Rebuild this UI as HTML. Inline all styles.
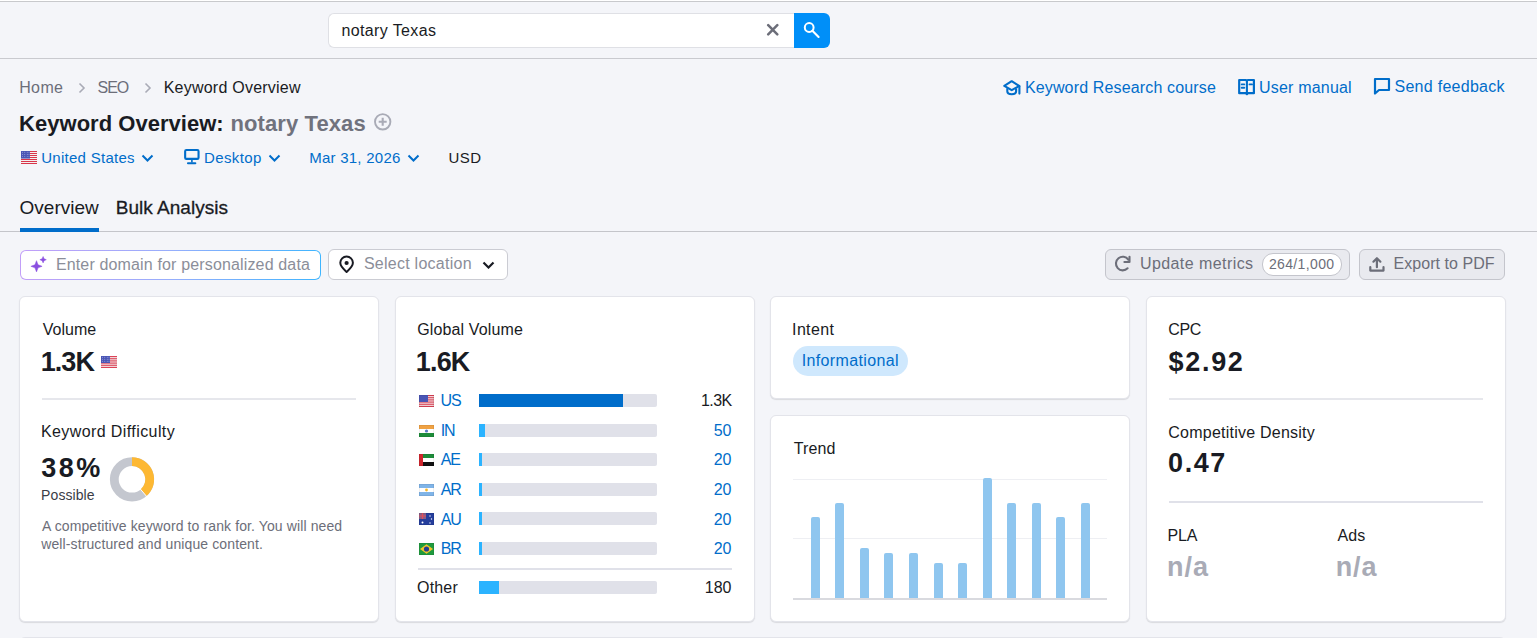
<!DOCTYPE html>
<html><head><meta charset="utf-8"><title>Keyword Overview</title>
<style>
html,body{margin:0;padding:0;}
body{width:1537px;height:638px;overflow:hidden;position:relative;background:#f4f5f9;font-family:"Liberation Sans",sans-serif;}
.t{position:absolute;white-space:nowrap;line-height:1;}
.card{position:absolute;background:#fff;border:1px solid #e3e4ea;border-radius:6px;box-shadow:0 1px 1px rgba(25,27,35,0.12);}
.bar{position:absolute;width:178px;height:13px;background:#e0e1e9;border-radius:0 2px 2px 0;overflow:hidden;}
.bar div{height:13px;}
</style></head><body>
<div style="position:absolute;left:0;top:0;width:1537px;height:1px;background:#fff"></div>
<div style="position:absolute;left:0;top:1px;width:1537px;height:1px;background:#c8c9cc"></div>
<div style="position:absolute;left:0;top:58px;width:1537px;height:1px;background:#c9cacf"></div>
<div style="position:absolute;left:328px;top:13px;width:465px;height:33px;background:#fff;border:1px solid #dfe0e5;border-right:none;border-radius:6px 0 0 6px"></div>
<div class="t" style="left:341.4px;top:23px;font-size:16px;color:#191b23;letter-spacing:0.38px;">notary Texas</div>
<svg style="position:absolute;left:766px;top:23px" width="13" height="13" viewBox="0 0 13 13"><path d="M2.2 2.2L11.3 11.3M11.3 2.2L2.2 11.3" stroke="#6c6e79" stroke-width="2.5" stroke-linecap="round"/></svg>
<div style="position:absolute;left:794px;top:13px;width:36px;height:35px;background:#008ff8;border-radius:0 6px 6px 0"></div>
<svg style="position:absolute;left:802px;top:20px" width="20" height="20" viewBox="0 0 20 20"><circle cx="7.2" cy="7.5" r="4.4" fill="none" stroke="#fff" stroke-width="2"/><path d="M10.4 10.8L16.6 17" stroke="#fff" stroke-width="2.1" stroke-linecap="round"/></svg>
<div class="t" style="left:19.2px;top:80px;font-size:16px;color:#6c6e79;letter-spacing:0.37px;">Home</div>
<svg style="position:absolute;left:77px;top:82px" width="10" height="12" viewBox="0 0 10 12"><path d="M2.5 1.5L7 6L2.5 10.5" fill="none" stroke="#a9abb6" stroke-width="1.6"/></svg>
<div class="t" style="left:97.5px;top:80px;font-size:16px;color:#6c6e79;letter-spacing:-1.01px;">SEO</div>
<svg style="position:absolute;left:143px;top:82px" width="10" height="12" viewBox="0 0 10 12"><path d="M2.5 1.5L7 6L2.5 10.5" fill="none" stroke="#a9abb6" stroke-width="1.6"/></svg>
<div class="t" style="left:163.7px;top:80px;font-size:16px;color:#191b23;letter-spacing:0.23px;">Keyword Overview</div>
<svg style="position:absolute;left:1003px;top:79px" width="19" height="18" viewBox="0 0 19 18"><path d="M8.7 2.2L16.2 6.9L8.7 11.2L1.3 6.9Z" fill="none" stroke="#006dca" stroke-width="2.1" stroke-linejoin="round"/><path d="M4.3 9.2V12.3C4.3 14.3 6.3 15.3 8.7 15.3S13.1 14.3 13.1 12.3V9.2" fill="none" stroke="#006dca" stroke-width="2.1"/><path d="M16.4 7.2V14.6" stroke="#006dca" stroke-width="2.1" stroke-linecap="round"/></svg>
<div class="t" style="left:1024.9px;top:80px;font-size:16px;color:#006dca;letter-spacing:0.15px;">Keyword Research course</div>
<svg style="position:absolute;left:1238px;top:78px" width="18" height="18" viewBox="0 0 18 18"><path d="M1.2 2H8L8.9 2.8L9.8 2H15.9V15.2H9.8L8.9 16.2L8 15.2H1.2Z" fill="none" stroke="#006dca" stroke-width="2.2" stroke-linejoin="round"/><path d="M8.9 2.5V15.5" stroke="#006dca" stroke-width="2.1"/><path d="M3.7 6.4H6.3M3.7 9.7H6.3M11.5 6.4H14" stroke="#006dca" stroke-width="1.9" stroke-linecap="round"/></svg>
<div class="t" style="left:1259.1px;top:80px;font-size:16px;color:#006dca;letter-spacing:0.18px;">User manual</div>
<svg style="position:absolute;left:1373px;top:77px" width="18" height="19" viewBox="0 0 18 19"><path d="M2 2H16V13H6L2 16.5Z" fill="none" stroke="#006dca" stroke-width="2.2" stroke-linejoin="round"/></svg>
<div class="t" style="left:1394.5px;top:79px;font-size:16px;color:#006dca;letter-spacing:0.27px;">Send feedback</div>
<div class="t" style="left:19.1px;top:113px;font-size:22px;color:#191b23;font-weight:700;letter-spacing:0.02px;">Keyword Overview:</div>
<div class="t" style="left:230.5px;top:113px;font-size:22px;color:#70727d;font-weight:700;letter-spacing:0.10px;">notary Texas</div>
<svg style="position:absolute;left:373px;top:113px" width="19" height="19" viewBox="0 0 19 19"><circle cx="9.7" cy="8.8" r="7.7" fill="none" stroke="#a9abb6" stroke-width="1.9"/><path d="M9.7 4.8V12.8M5.7 8.8H13.7" stroke="#a9abb6" stroke-width="2.1"/></svg>
<svg style="position:absolute;left:21px;top:151px" width="16" height="13" viewBox="0 0 16 12" preserveAspectRatio="none"><rect width="16" height="12" fill="#f4f0f0"/><rect x="0" y="0.00" width="16" height="0.92" fill="#d8354a"/><rect x="0" y="1.85" width="16" height="0.92" fill="#d8354a"/><rect x="0" y="3.69" width="16" height="0.92" fill="#d8354a"/><rect x="0" y="5.54" width="16" height="0.92" fill="#d8354a"/><rect x="0" y="7.38" width="16" height="0.92" fill="#d8354a"/><rect x="0" y="9.23" width="16" height="0.92" fill="#d8354a"/><rect x="0" y="11.08" width="16" height="0.92" fill="#d8354a"/><rect x="0" y="0" width="9" height="7" fill="#4a55b5"/><circle cx="1.4" cy="1.2" r="0.45" fill="#c8cdf0"/><circle cx="3.8" cy="1.2" r="0.45" fill="#c8cdf0"/><circle cx="6.2" cy="1.2" r="0.45" fill="#c8cdf0"/><circle cx="8.0" cy="1.2" r="0.45" fill="#c8cdf0"/><circle cx="1.4" cy="3.2" r="0.45" fill="#c8cdf0"/><circle cx="3.8" cy="3.2" r="0.45" fill="#c8cdf0"/><circle cx="6.2" cy="3.2" r="0.45" fill="#c8cdf0"/><circle cx="8.0" cy="3.2" r="0.45" fill="#c8cdf0"/><circle cx="1.4" cy="5.2" r="0.45" fill="#c8cdf0"/><circle cx="3.8" cy="5.2" r="0.45" fill="#c8cdf0"/><circle cx="6.2" cy="5.2" r="0.45" fill="#c8cdf0"/><circle cx="8.0" cy="5.2" r="0.45" fill="#c8cdf0"/></svg>
<div class="t" style="left:41.2px;top:150px;font-size:15px;color:#006dca;letter-spacing:0.28px;">United States</div>
<svg style="position:absolute;left:141px;top:154px" width="13" height="8" viewBox="0 0 13 8"><path d="M1.5 1.5L6.5 6.5L11.5 1.5" fill="none" stroke="#006dca" stroke-width="2"/></svg>
<svg style="position:absolute;left:183px;top:148px" width="17" height="17" viewBox="0 0 17 17"><rect x="2.15" y="1.95" width="13.4" height="8.9" rx="1.2" fill="none" stroke="#006dca" stroke-width="2.1"/><path d="M8.9 11.5V14.5" stroke="#006dca" stroke-width="1.6"/><path d="M5 15.2H12.3" stroke="#006dca" stroke-width="2.1" stroke-linecap="round"/></svg>
<div class="t" style="left:204.0px;top:150px;font-size:15px;color:#006dca;letter-spacing:0.38px;">Desktop</div>
<svg style="position:absolute;left:268px;top:154px" width="13" height="8" viewBox="0 0 13 8"><path d="M1.5 1.5L6.5 6.5L11.5 1.5" fill="none" stroke="#006dca" stroke-width="2"/></svg>
<div class="t" style="left:309.2px;top:150px;font-size:15px;color:#006dca;letter-spacing:0.25px;">Mar 31, 2026</div>
<svg style="position:absolute;left:407px;top:154px" width="13" height="8" viewBox="0 0 13 8"><path d="M1.5 1.5L6.5 6.5L11.5 1.5" fill="none" stroke="#006dca" stroke-width="2"/></svg>
<div class="t" style="left:448.5px;top:150px;font-size:15px;color:#191b23;letter-spacing:0.49px;">USD</div>
<div class="t" style="left:19.5px;top:198px;font-size:19px;color:#191b23;letter-spacing:0.01px;">Overview</div>
<div class="t" style="left:115.7px;top:198px;font-size:19px;color:#191b23;letter-spacing:0.03px;-webkit-text-stroke:0.3px #191b23;">Bulk Analysis</div>
<div style="position:absolute;left:0;top:231px;width:1537px;height:1px;background:#c4c5ca"></div>
<div style="position:absolute;left:20px;top:228px;width:79px;height:4px;background:#006dca"></div>
<div style="position:absolute;left:20px;top:250px;width:301px;height:30px;border-radius:6px;background:linear-gradient(90deg,#c29ef8 0%,#97aefc 50%,#3eb5ff 100%)"></div>
<div style="position:absolute;left:21px;top:251px;width:299px;height:28px;border-radius:5px;background:#fff"></div>
<svg style="position:absolute;left:29px;top:256px" width="20" height="20" viewBox="0 0 20 20"><path d="M7.5 4.700000000000001L9.05 8.75L13.1 10.3L9.05 11.85L7.5 15.9L5.95 11.85L1.9000000000000004 10.3L5.95 8.75Z" fill="#8a4fe0" stroke="#8a4fe0" stroke-width="0.5" stroke-linejoin="round"/><path d="M14.1 0.5L15.05 2.75L17.3 3.7L15.05 4.65L14.1 6.9L13.15 4.65L10.899999999999999 3.7L13.15 2.75Z" fill="#8a4fe0" stroke="#8a4fe0" stroke-width="0.5" stroke-linejoin="round"/></svg>
<div class="t" style="left:55.9px;top:257px;font-size:16px;color:#8b8e99;letter-spacing:0.15px;">Enter domain for personalized data</div>
<div style="position:absolute;left:328px;top:249px;width:178px;height:29px;border:1px solid #cbccd3;border-radius:6px;background:#fff"></div>
<svg style="position:absolute;left:337px;top:255px" width="19" height="19" viewBox="0 0 19 19"><path d="M9.6 16.9C7.5 15 3.3 11.6 3.3 7.8A6.3 6.3 0 0 1 15.9 7.8C15.9 11.6 11.7 15 9.6 16.9Z" fill="none" stroke="#191b23" stroke-width="2" stroke-linejoin="round"/><circle cx="9.6" cy="8" r="2.1" fill="#191b23"/></svg>
<div class="t" style="left:363.9px;top:256px;font-size:16px;color:#8b8e99;letter-spacing:0.26px;">Select location</div>
<svg style="position:absolute;left:482px;top:261px" width="13" height="8" viewBox="0 0 13 8"><path d="M1.5 1.5L6.5 6.5L11.5 1.5" fill="none" stroke="#191b23" stroke-width="2.2"/></svg>
<div style="position:absolute;left:1105px;top:249px;width:243px;height:29px;border:1px solid #c4c5cc;border-radius:6px;background:#e9eaef"></div>
<svg style="position:absolute;left:1113px;top:255px" width="19" height="19" viewBox="0 0 19 19"><path d="M15.3 4.6A6.8 6.8 0 1 0 14.6 13.3" fill="none" stroke="#6c6e79" stroke-width="2.1" stroke-linecap="round"/><path d="M11.4 7H16.5V1.8" fill="none" stroke="#6c6e79" stroke-width="2.1" stroke-linecap="round" stroke-linejoin="round"/></svg>
<div class="t" style="left:1139.9px;top:256px;font-size:16px;color:#6c6e79;letter-spacing:0.43px;">Update metrics</div>
<div style="position:absolute;left:1262px;top:253px;width:78px;height:21px;border:1px solid #c4c5cc;border-radius:11px;background:#fff"></div>
<div class="t" style="left:1268.9px;top:257px;font-size:14px;color:#6c6e79;letter-spacing:0.37px;">264/1,000</div>
<div style="position:absolute;left:1359px;top:249px;width:144px;height:29px;border:1px solid #c4c5cc;border-radius:6px;background:#e9eaef"></div>
<svg style="position:absolute;left:1368px;top:256px" width="18" height="17" viewBox="0 0 18 17"><path d="M2.3 11.2V14.6H15.5V11.2" fill="none" stroke="#6c6e79" stroke-width="2.2" stroke-linecap="round" stroke-linejoin="round"/><path d="M8.9 11.2V2.3M5.4 5.7L8.9 2.2L12.4 5.7" fill="none" stroke="#6c6e79" stroke-width="2.2" stroke-linecap="round" stroke-linejoin="round"/></svg>
<div class="t" style="left:1393.6px;top:256px;font-size:16px;color:#6c6e79;letter-spacing:0.04px;">Export to PDF</div>
<div class="card" style="left:19px;top:296px;width:358px;height:324px"></div>
<div class="card" style="left:395px;top:296px;width:358px;height:324px"></div>
<div class="card" style="left:770px;top:296px;width:358px;height:101px"></div>
<div class="card" style="left:770px;top:415px;width:358px;height:205px"></div>
<div class="card" style="left:1146px;top:296px;width:358px;height:324px"></div>
<div class="card" style="left:19px;top:637px;width:1485px;height:100px"></div>
<div class="t" style="left:42.7px;top:322px;font-size:16px;color:#191b23;letter-spacing:0.03px;">Volume</div>
<div class="t" style="left:40.8px;top:349px;font-size:27px;color:#191b23;font-weight:700;letter-spacing:-0.97px;">1.3K</div>
<svg style="position:absolute;left:101px;top:356px" width="16" height="12" viewBox="0 0 16 12" preserveAspectRatio="none"><rect width="16" height="12" fill="#f4f0f0"/><rect x="0" y="0.00" width="16" height="0.92" fill="#d8354a"/><rect x="0" y="1.85" width="16" height="0.92" fill="#d8354a"/><rect x="0" y="3.69" width="16" height="0.92" fill="#d8354a"/><rect x="0" y="5.54" width="16" height="0.92" fill="#d8354a"/><rect x="0" y="7.38" width="16" height="0.92" fill="#d8354a"/><rect x="0" y="9.23" width="16" height="0.92" fill="#d8354a"/><rect x="0" y="11.08" width="16" height="0.92" fill="#d8354a"/><rect x="0" y="0" width="9" height="7" fill="#4a55b5"/><circle cx="1.4" cy="1.2" r="0.45" fill="#c8cdf0"/><circle cx="3.8" cy="1.2" r="0.45" fill="#c8cdf0"/><circle cx="6.2" cy="1.2" r="0.45" fill="#c8cdf0"/><circle cx="8.0" cy="1.2" r="0.45" fill="#c8cdf0"/><circle cx="1.4" cy="3.2" r="0.45" fill="#c8cdf0"/><circle cx="3.8" cy="3.2" r="0.45" fill="#c8cdf0"/><circle cx="6.2" cy="3.2" r="0.45" fill="#c8cdf0"/><circle cx="8.0" cy="3.2" r="0.45" fill="#c8cdf0"/><circle cx="1.4" cy="5.2" r="0.45" fill="#c8cdf0"/><circle cx="3.8" cy="5.2" r="0.45" fill="#c8cdf0"/><circle cx="6.2" cy="5.2" r="0.45" fill="#c8cdf0"/><circle cx="8.0" cy="5.2" r="0.45" fill="#c8cdf0"/></svg>
<div style="position:absolute;left:42px;top:398px;width:314px;height:2px;background:#e6e7ec"></div>
<div class="t" style="left:40.9px;top:424px;font-size:16px;color:#191b23;letter-spacing:0.41px;">Keyword Difficulty</div>
<div class="t" style="left:41.3px;top:455px;font-size:27px;color:#191b23;font-weight:700;letter-spacing:2.42px;">38%</div>
<div class="t" style="left:41.1px;top:488px;font-size:14px;color:#3a3c46;letter-spacing:0.08px;">Possible</div>
<svg style="position:absolute;left:0;top:0" width="200" height="520" viewBox="0 0 200 520"><circle cx="132" cy="479.3" r="17.7" fill="none" stroke="#c4c7cf" stroke-width="8.8"/><path d="M132 461.6A17.7 17.7 0 0 1 143.50 492.76" fill="none" stroke="#fdb833" stroke-width="8.8"/><line x1="139.60" y1="488.20" x2="147.39" y2="497.32" stroke="#fff" stroke-width="1"/></svg>
<div class="t" style="left:42.0px;top:519px;font-size:14px;color:#6c6e79;letter-spacing:0.11px;">A competitive keyword to rank for. You will need</div>
<div class="t" style="left:41.2px;top:537px;font-size:14px;color:#6c6e79;letter-spacing:0.11px;">well-structured and unique content.</div>
<div class="t" style="left:417.3px;top:322px;font-size:16px;color:#191b23;letter-spacing:0.12px;">Global Volume</div>
<div class="t" style="left:415.8px;top:349px;font-size:27px;color:#191b23;font-weight:700;letter-spacing:-0.83px;">1.6K</div>
<svg style="position:absolute;left:419px;top:395px" width="15" height="12" viewBox="0 0 15 12"><rect width="15" height="12" fill="#f4f0f0"/><rect y="0.00" width="15" height="0.95" fill="#d8354a"/><rect y="1.85" width="15" height="0.95" fill="#d8354a"/><rect y="3.69" width="15" height="0.95" fill="#d8354a"/><rect y="5.54" width="15" height="0.95" fill="#d8354a"/><rect y="7.38" width="15" height="0.95" fill="#d8354a"/><rect y="9.23" width="15" height="0.95" fill="#d8354a"/><rect y="11.08" width="15" height="0.95" fill="#d8354a"/><rect width="9" height="7" fill="#4a55b5"/><rect x="0.25" y="0.25" width="14.5" height="11.5" fill="none" stroke="rgba(0,0,0,0.13)" stroke-width="0.5"/></svg>
<div class="t" style="left:440.5px;top:393px;font-size:16px;color:#006dca;letter-spacing:-1.02px;">US</div>
<div class="bar" style="left:479px;top:394px"><div style="width:144px;background:#006dca"></div></div>
<div class="t" style="left:531.5px;width:200px;text-align:right;top:393px;font-size:16px;color:#191b23;letter-spacing:-0.60px;">1.3K</div>
<svg style="position:absolute;left:419px;top:425px" width="15" height="12" viewBox="0 0 15 12"><rect width="15" height="4" fill="#f0a243"/><rect y="4" width="15" height="4" fill="#fff"/><rect y="8" width="15" height="4" fill="#1d8c3a"/><circle cx="7.5" cy="6" r="1.6" fill="#5a7bc4"/><rect x="0.25" y="0.25" width="14.5" height="11.5" fill="none" stroke="rgba(0,0,0,0.13)" stroke-width="0.5"/></svg>
<div class="t" style="left:440.7px;top:422.5px;font-size:16px;color:#006dca;letter-spacing:-1.02px;">IN</div>
<div class="bar" style="left:479px;top:424px"><div style="width:6px;background:#2bb3ff"></div></div>
<div class="t" style="left:531.5px;width:200px;text-align:right;top:422.5px;font-size:16px;color:#006dca;">50</div>
<svg style="position:absolute;left:419px;top:454px" width="15" height="12" viewBox="0 0 15 12"><rect width="15" height="4" fill="#1d8c3a"/><rect y="4" width="15" height="4" fill="#fff"/><rect y="8" width="15" height="4" fill="#111"/><rect width="4" height="12" fill="#d0262e"/><rect x="0.25" y="0.25" width="14.5" height="11.5" fill="none" stroke="rgba(0,0,0,0.13)" stroke-width="0.5"/></svg>
<div class="t" style="left:440.7px;top:452px;font-size:16px;color:#006dca;letter-spacing:-1.02px;">AE</div>
<div class="bar" style="left:479px;top:453px"><div style="width:3px;background:#2bb3ff"></div></div>
<div class="t" style="left:531.5px;width:200px;text-align:right;top:452px;font-size:16px;color:#006dca;">20</div>
<svg style="position:absolute;left:419px;top:484px" width="15" height="12" viewBox="0 0 15 12"><rect width="15" height="4" fill="#7fb4e8"/><rect y="4" width="15" height="4" fill="#fff"/><rect y="8" width="15" height="4" fill="#7fb4e8"/><circle cx="7.5" cy="6" r="1.4" fill="#f5b82e"/><rect x="0.25" y="0.25" width="14.5" height="11.5" fill="none" stroke="rgba(0,0,0,0.13)" stroke-width="0.5"/></svg>
<div class="t" style="left:440.7px;top:482px;font-size:16px;color:#006dca;letter-spacing:-1.02px;">AR</div>
<div class="bar" style="left:479px;top:483px"><div style="width:3px;background:#2bb3ff"></div></div>
<div class="t" style="left:531.5px;width:200px;text-align:right;top:482px;font-size:16px;color:#006dca;">20</div>
<svg style="position:absolute;left:419px;top:513px" width="15" height="12" viewBox="0 0 15 12"><rect width="15" height="12" fill="#253e9c"/><rect width="7" height="6" fill="#8a5d86"/><path d="M3.5 0V6M0 3H7" stroke="#e0505a" stroke-width="1.2"/><circle cx="3.5" cy="9.5" r="1" fill="#fff"/><circle cx="11" cy="3" r="0.7" fill="#fff"/><circle cx="12.5" cy="6" r="0.7" fill="#fff"/><circle cx="11" cy="10" r="0.7" fill="#fff"/><rect x="0.25" y="0.25" width="14.5" height="11.5" fill="none" stroke="rgba(0,0,0,0.13)" stroke-width="0.5"/></svg>
<div class="t" style="left:440.7px;top:511.5px;font-size:16px;color:#006dca;letter-spacing:-1.02px;">AU</div>
<div class="bar" style="left:479px;top:512px"><div style="width:3px;background:#2bb3ff"></div></div>
<div class="t" style="left:531.5px;width:200px;text-align:right;top:511.5px;font-size:16px;color:#006dca;">20</div>
<svg style="position:absolute;left:419px;top:543px" width="15" height="12" viewBox="0 0 15 12"><rect width="15" height="12" fill="#1f9a3e"/><path d="M7.5 1.2L14 6L7.5 10.8L1 6Z" fill="#f2c52c"/><circle cx="7.5" cy="6" r="2.6" fill="#243f8f"/><rect x="0.25" y="0.25" width="14.5" height="11.5" fill="none" stroke="rgba(0,0,0,0.13)" stroke-width="0.5"/></svg>
<div class="t" style="left:440.7px;top:541px;font-size:16px;color:#006dca;letter-spacing:-1.02px;">BR</div>
<div class="bar" style="left:479px;top:542px"><div style="width:3px;background:#2bb3ff"></div></div>
<div class="t" style="left:531.5px;width:200px;text-align:right;top:541px;font-size:16px;color:#006dca;">20</div>
<div style="position:absolute;left:418px;top:568px;width:314px;height:2px;background:#e0e1e9"></div>
<div class="t" style="left:417.1px;top:580px;font-size:16px;color:#191b23;letter-spacing:0.16px;">Other</div>
<div class="bar" style="left:479px;top:581px"><div style="width:20px;background:#2bb3ff"></div></div>
<div class="t" style="left:531.5px;width:200px;text-align:right;top:580px;font-size:16px;color:#191b23;">180</div>
<div class="t" style="left:792.1px;top:322px;font-size:16px;color:#191b23;letter-spacing:0.34px;">Intent</div>
<div style="position:absolute;left:793px;top:346px;width:115px;height:30px;border-radius:15px;background:#cfe8fd"></div>
<div class="t" style="left:801.7px;top:353px;font-size:16px;color:#006dca;letter-spacing:0.36px;">Informational</div>
<div class="t" style="left:793.8px;top:441px;font-size:16px;color:#191b23;letter-spacing:0.09px;">Trend</div>
<div style="position:absolute;left:793px;top:479px;width:314px;height:1px;background:#eeeff3"></div>
<div style="position:absolute;left:793px;top:538px;width:314px;height:1px;background:#eeeff3"></div>
<div style="position:absolute;left:793px;top:598px;width:314px;height:2px;background:#d9dadf"></div>
<div style="position:absolute;left:811px;top:517.0px;width:9px;height:81.0px;background:#8fc6ef;border-radius:2px 2px 0 0"></div>
<div style="position:absolute;left:835px;top:502.5px;width:9px;height:95.5px;background:#8fc6ef;border-radius:2px 2px 0 0"></div>
<div style="position:absolute;left:860px;top:548.0px;width:9px;height:50.0px;background:#8fc6ef;border-radius:2px 2px 0 0"></div>
<div style="position:absolute;left:884px;top:553.4px;width:9px;height:44.6px;background:#8fc6ef;border-radius:2px 2px 0 0"></div>
<div style="position:absolute;left:909px;top:553.4px;width:9px;height:44.6px;background:#8fc6ef;border-radius:2px 2px 0 0"></div>
<div style="position:absolute;left:934px;top:562.6px;width:9px;height:35.4px;background:#8fc6ef;border-radius:2px 2px 0 0"></div>
<div style="position:absolute;left:958px;top:562.6px;width:9px;height:35.4px;background:#8fc6ef;border-radius:2px 2px 0 0"></div>
<div style="position:absolute;left:983px;top:478.3px;width:9px;height:119.7px;background:#8fc6ef;border-radius:2px 2px 0 0"></div>
<div style="position:absolute;left:1007px;top:502.5px;width:9px;height:95.5px;background:#8fc6ef;border-radius:2px 2px 0 0"></div>
<div style="position:absolute;left:1032px;top:502.5px;width:9px;height:95.5px;background:#8fc6ef;border-radius:2px 2px 0 0"></div>
<div style="position:absolute;left:1056px;top:517.2px;width:9px;height:80.8px;background:#8fc6ef;border-radius:2px 2px 0 0"></div>
<div style="position:absolute;left:1081px;top:502.5px;width:9px;height:95.5px;background:#8fc6ef;border-radius:2px 2px 0 0"></div>
<div class="t" style="left:1168.3px;top:322px;font-size:16px;color:#191b23;letter-spacing:-0.39px;">CPC</div>
<div class="t" style="left:1168.6px;top:349px;font-size:27px;color:#191b23;font-weight:700;letter-spacing:1.68px;">$2.92</div>
<div style="position:absolute;left:1169px;top:398px;width:314px;height:2px;background:#e6e7ec"></div>
<div class="t" style="left:1168.3px;top:425px;font-size:16px;color:#191b23;letter-spacing:0.23px;">Competitive Density</div>
<div class="t" style="left:1168.1px;top:450px;font-size:27px;color:#191b23;font-weight:700;letter-spacing:1.53px;">0.47</div>
<div style="position:absolute;left:1169px;top:501px;width:314px;height:2px;background:#e0e1e9"></div>
<div class="t" style="left:1167.6px;top:528px;font-size:16px;color:#191b23;letter-spacing:-0.21px;">PLA</div>
<div class="t" style="left:1167.0px;top:554px;font-size:27px;color:#a9abb6;font-weight:700;letter-spacing:1.06px;">n/a</div>
<div class="t" style="left:1337.4px;top:528px;font-size:16px;color:#191b23;letter-spacing:0.13px;">Ads</div>
<div class="t" style="left:1335.7px;top:554px;font-size:27px;color:#a9abb6;font-weight:700;letter-spacing:0.87px;">n/a</div>
</body></html>
